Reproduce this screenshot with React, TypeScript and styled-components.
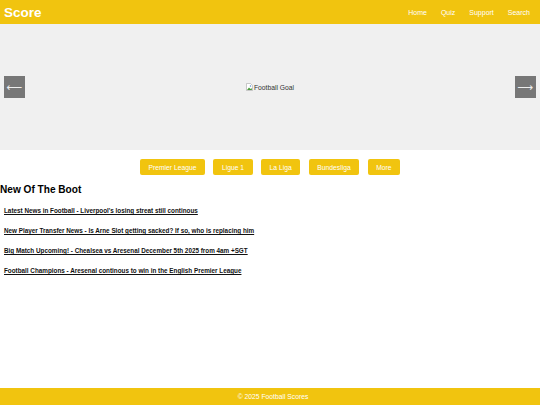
import React from "react";
import styled, { createGlobalStyle } from "styled-components";

const Global = createGlobalStyle`
  html, body { margin: 0; padding: 0; }
  body { font-family: "Liberation Sans", Arial, sans-serif; background: #fff; }
  * { box-sizing: border-box; }
`;

const Page = styled.div`
  min-height: 100vh;
  display: flex;
  flex-direction: column;
`;

const Header = styled.header`
  height: 24px;
  background: #f1c40f;
  display: flex;
  align-items: center;
  justify-content: space-between;
  padding: 0 10px 0 4px;
`;

const Logo = styled.div`
  color: #fff;
  font-weight: bold;
  font-size: 13.5px;
`;

const Nav = styled.nav`
  display: flex;
  gap: 14px;
`;

const NavLink = styled.a`
  color: #fff;
  font-size: 7px;
  text-decoration: none;
`;

const Hero = styled.section`
  height: 126px;
  background: #f0f0f0;
  display: flex;
  align-items: center;
  justify-content: space-between;
  padding: 0 4px;
`;

const Arrow = styled.button`
  width: 21px;
  height: 22px;
  border: none;
  padding: 0;
  background: #777;
  color: #eee;
  font-size: 11px;
  display: flex;
  align-items: center;
  justify-content: center;
  font-family: "DejaVu Sans", sans-serif;
`;

const Alt = styled.div`
  display: flex;
  align-items: center;
  gap: 1px;
  font-size: 6.75px;
  color: #333;
`;

const Categories = styled.div`
  display: flex;
  justify-content: center;
  gap: 8.5px;
  margin-top: 9px;
`;

const CatButton = styled.button`
  height: 16px;
  padding: 0 8.5px;
  border: none;
  border-radius: 2px;
  background: #f1c40f;
  color: #fff;
  font-family: "Liberation Sans", Arial, sans-serif;
  font-size: 6.75px;
`;

const Heading = styled.h2`
  margin: 9px 0 0 0;
  font-size: 10.1px;
  font-weight: bold;
  color: #000;
`;

const NewsList = styled.div`
  display: flex;
  flex-direction: column;
  gap: 12px;
  padding: 12px 4px 0;
`;

const NewsLink = styled.a`
  font-size: 6.33px;
  font-weight: bold;
  color: #111;
  text-decoration: underline;
  line-height: 8px;
`;

const Footer = styled.footer`
  margin-top: auto;
  height: 17px;
  background: #f1c40f;
  color: #fff;
  font-size: 6.75px;
  display: flex;
  align-items: center;
  justify-content: center;
  padding-left: 6px;
`;

const BrokenIcon = () => (
  <svg width="7" height="8" viewBox="0 0 14 16">
    <path d="M1 1h8l4 4v10H1z" fill="#fff" stroke="#999" strokeWidth="1" />
    <path d="M2 14l4-5 3 3 2-2 1 4z" fill="#4a9a3a" />
    <circle cx="9" cy="6" r="1.5" fill="#5a8fd0" />
  </svg>
);

const news = [
  "Latest News in Football - Liverpool's losing streat still continous",
  "New Player Transfer News - Is Arne Slot getting sacked? If so, who is replacing him",
  "Big Match Upcoming! - Chealsea vs Aresenal December 5th 2025 from 4am +SGT",
  "Football Champions - Aresenal continous to win in the English Premier League",
];

const cats = ["Premier League", "Ligue 1", "La Liga", "Bundesliga", "More"];

export default function App() {
  return (
    <Page>
      <Global />
      <Header>
        <Logo>Score</Logo>
        <Nav>
          <NavLink>Home</NavLink>
          <NavLink>Quiz</NavLink>
          <NavLink>Support</NavLink>
          <NavLink>Search</NavLink>
        </Nav>
      </Header>
      <Hero>
        <Arrow>⟵</Arrow>
        <Alt>
          <BrokenIcon />
          <span>Football Goal</span>
        </Alt>
        <Arrow>⟶</Arrow>
      </Hero>
      <Categories>
        {cats.map((c) => (
          <CatButton key={c}>{c}</CatButton>
        ))}
      </Categories>
      <Heading>New Of The Boot</Heading>
      <NewsList>
        {news.map((n) => (
          <NewsLink key={n} href="#">
            {n}
          </NewsLink>
        ))}
      </NewsList>
      <Footer>© 2025 Football Scores</Footer>
    </Page>
  );
}
